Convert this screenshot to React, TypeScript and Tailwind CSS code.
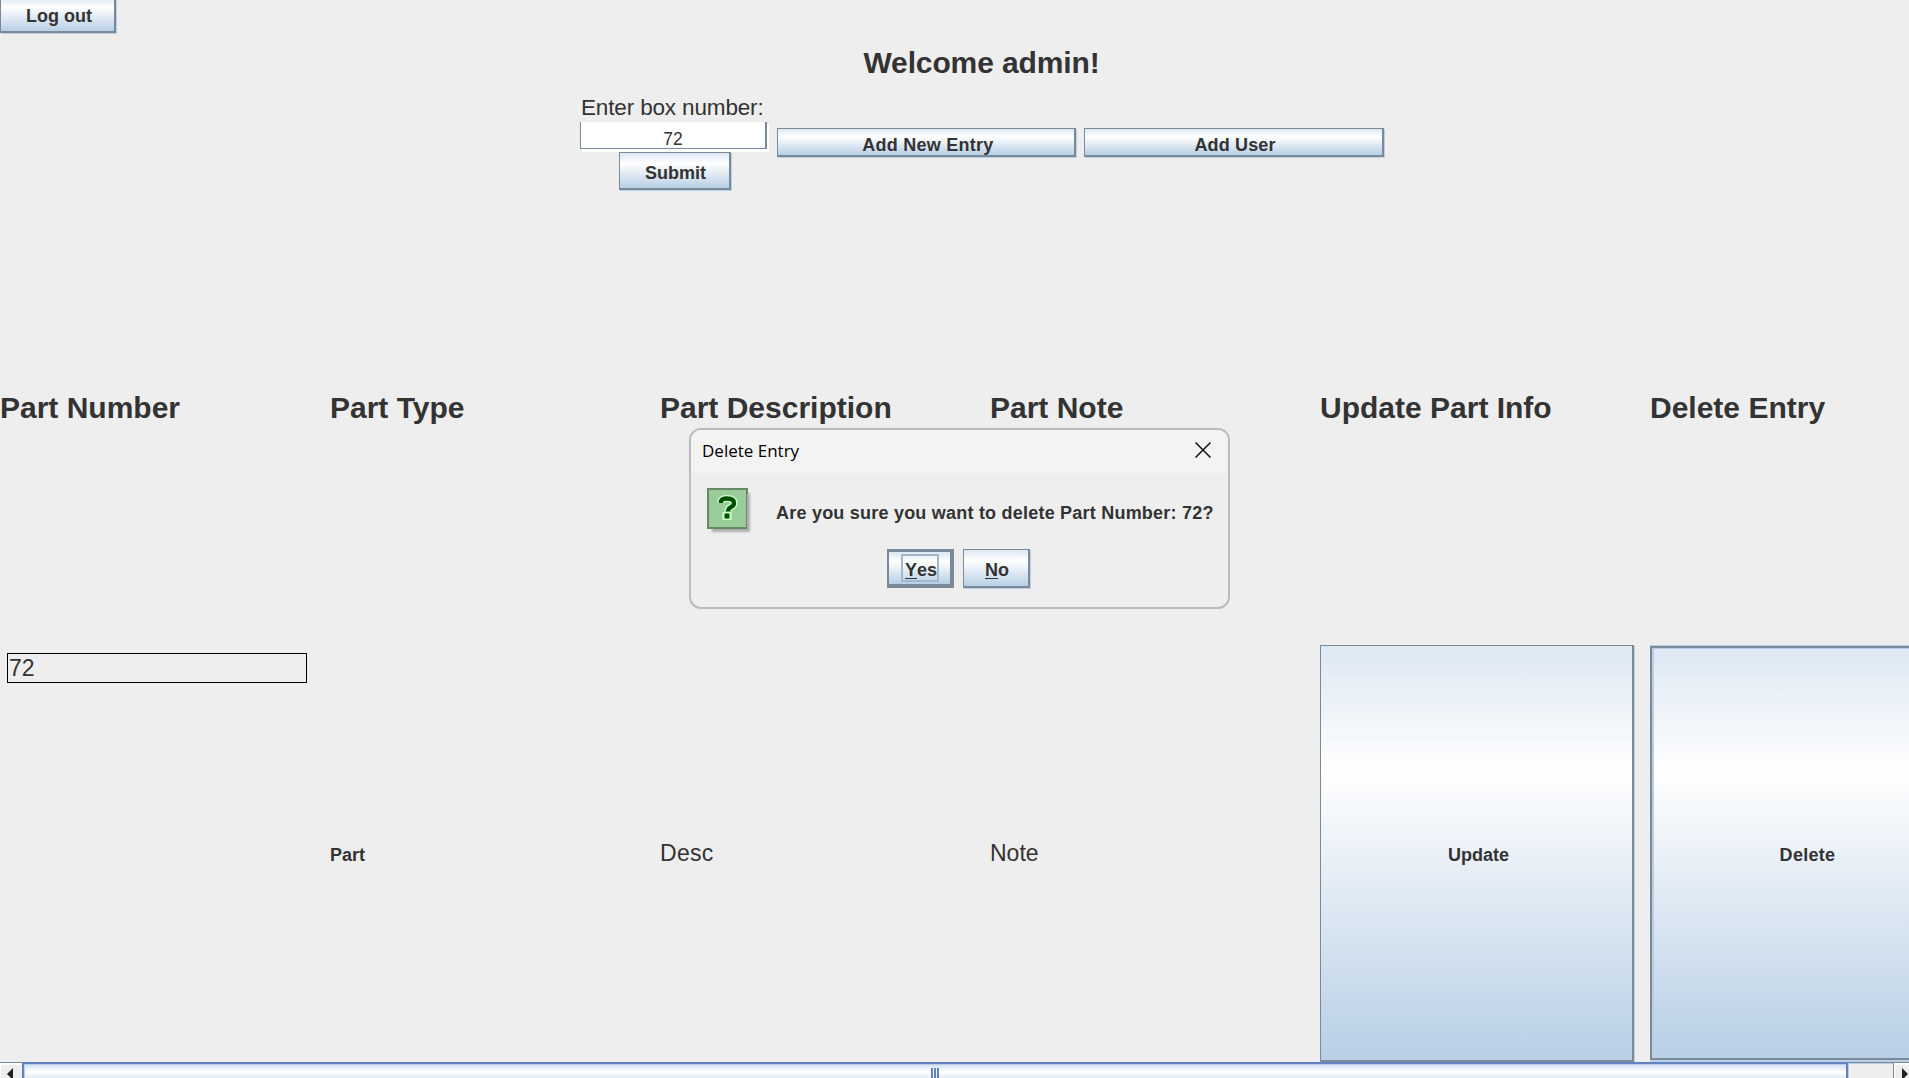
import type { ReactNode } from "react";

const SANS = "font-['Liberation_Sans',Arial,sans-serif]";

type ButtonProps = { className?: string; children: ReactNode };

function MetalButton({ className = "", children }: ButtonProps) {
  return (
    <button
      className={`flex items-center justify-center whitespace-nowrap border-t border-l border-r-2 border-b-2 border-[#7a8a99] bg-linear-to-b from-[#dde8f3] via-white via-30% to-[#b8cfe5] text-[18px] font-bold leading-5 shadow-[1px_1px_0_#b8cfe5] ${className}`}
    >
      {children}
    </button>
  );
}

function QuestionIcon() {
  return (
    <svg width="46" height="50" viewBox="0 0 46 50" className="shrink-0">
      <defs>
        <filter id="soft" x="-20%" y="-20%" width="140%" height="140%">
          <feGaussianBlur stdDeviation="1.3" />
        </filter>
      </defs>
      <rect x="5" y="5" width="38" height="39" fill="#999" opacity=".75" filter="url(#soft)" />
      <path d="M0 0H41V6H40V41H6V41H0Z" fill="#668866" />
      <rect x="2" y="2" width="37" height="37" fill="#99cc99" />
      <g fill="none" strokeLinejoin="round">
        <path d="M14 15V13Q15 10.500 20 10.500Q27 10.500 27 15Q27 18 24 19Q21 20.500 21 23.500" stroke="#ccffcc" strokeWidth="7" />
        <rect x="15.500" y="24" width="9" height="8" fill="#ccffcc" />
        <path d="M14 15V13Q15 10.500 20 10.500Q27 10.500 27 15Q27 18 24 19Q21 20.500 21 23.500" stroke="#004d00" strokeWidth="4.300" />
        <rect x="17.500" y="25.500" width="5" height="5" fill="#004d00" />
      </g>
    </svg>
  );
}

function DeleteDialog() {
  return (
    <div className="absolute left-[689px] top-[428px] flex h-[181px] w-[541px] flex-col overflow-hidden rounded-xl border-2 border-[#bbbbbb] bg-[#eeeeee]">
      <div className="flex h-[43px] shrink-0 items-center justify-between bg-[#f3f3f3] pr-[17px] pl-[11px] text-black">
        <span className="pb-0.5 font-['Open_Sans','Noto_Sans',sans-serif] text-[17px] leading-6">Delete Entry</span>
        <svg width="16" height="16" viewBox="0 0 16 16" className="mb-1">
          <path d="M.5 .5L15.500 15.500M15.500 .5L.5 15.500" stroke="#111" strokeWidth="1.500" />
        </svg>
      </div>
      <div className="flex h-[76px] shrink-0 pt-[15px] pl-4">
        <QuestionIcon />
        <span className="mt-[15px] ml-[23px] whitespace-nowrap text-[18px] font-bold leading-5 tracking-[0.22px]">
          Are you sure you want to delete Part Number: 72?
        </span>
      </div>
      <div className="flex gap-[9px] pl-[196px]">
        <button className="flex h-[39px] w-[67px] items-center justify-center border-t-[3px] border-r-4 border-b-4 border-l-2 border-[#7a8a99] bg-linear-to-b from-[#dde8f3] via-white via-30% to-[#b8cfe5] pl-px">
          <span className="flex h-7 w-[38px] items-end justify-center border-2 border-[#a3b8cc] pl-0.5 text-[18px] font-bold leading-5">
            <u className="underline-offset-2">Y</u>es
          </span>
        </button>
        <MetalButton className="h-[39px] w-[67px] pt-[4px] pl-0.5">
          <u className="underline-offset-2">N</u>o
        </MetalButton>
      </div>
    </div>
  );
}

function ScrollBar() {
  return (
    <div className="flex h-4 shrink-0 overflow-hidden">
      <div className="flex w-[22px] border-t border-[#7a8a99] pt-[5px] pl-[7px] shadow-[inset_1px_2px_0_white]">
        <svg width="6" height="12" viewBox="0 0 6 12"><path d="M6 0V12L0 6Z" fill="#222" /></svg>
      </div>
      <div className="flex h-6 w-[1826px] justify-center gap-px border-2 border-[#6382bf] bg-linear-to-b from-[#d0e0f0] via-white via-40% to-[#c8daeb] pt-1 shadow-[inset_1px_1px_0_#b8cfe5]">
        <i className="h-4 w-0.5 bg-[#6382bf]" />
        <i className="h-4 w-0.5 bg-[#6382bf]" />
        <i className="h-4 w-0.5 bg-[#6382bf]" />
      </div>
      <div className="w-[45px] border-t border-[#7a8a99] shadow-[inset_1px_1px_0_#b8cfe5]" />
      <div className="flex w-4 border-t border-l border-[#7a8a99] pt-[5px] pl-2 shadow-[inset_1px_2px_0_white]">
        <svg width="6" height="12" viewBox="0 0 6 12"><path d="M0 0V12L6 6Z" fill="#222" /></svg>
      </div>
    </div>
  );
}

const HEADERS = ["Part Number", "Part Type", "Part Description", "Part Note", "Update Part Info", "Delete Entry"];

export default function App() {
  return (
    <div className={`relative flex h-[1078px] w-[1909px] flex-col overflow-hidden bg-[#eeeeee] text-[#333333] ${SANS}`}>
      <header className="flex h-[33px] shrink-0">
        <MetalButton className="-mt-1 h-[37px] w-[116px] pt-1 pl-[3px]">Log out</MetalButton>
      </header>
      <h1 className="h-[63px] shrink-0 pt-[12px] pl-[54px] text-center text-[30px] font-bold leading-9 tracking-[-0.12px]">Welcome admin!</h1>

      <section className="flex h-[300px] shrink-0 items-start pl-[580px]">
        <div className="flex w-[189px] flex-col items-center">
          <label className="h-[26px] w-full whitespace-nowrap pl-px text-[22.5px] leading-6 tracking-[-0.15px]">Enter box number:</label>
          <div className="h-[27px] w-[187px] self-start border-r-2 border-b border-l border-[#7a8a99] bg-white pt-[7px] text-center text-[17.5px] leading-5 shadow-[2px_3px_0_white]">
            72
          </div>
          <MetalButton className="mt-[3px] h-[38px] w-[112px] pt-[4px] pl-[3px]">Submit</MetalButton>
        </div>
        <div className="mt-8 ml-2 flex gap-2">
          <MetalButton className="h-[29px] w-[299px] pt-[5px] pl-1 tracking-[0.25px]">Add New Entry</MetalButton>
          <MetalButton className="h-[29px] w-[300px] pt-[5px] pl-[3px] tracking-[0.15px]">Add User</MetalButton>
        </div>
      </section>

      <main className="grid h-[666px] shrink-0 grid-cols-[repeat(6,330px)] grid-rows-[249px_417px]">
        {HEADERS.map((title) => (
          <h2 key={title} className="-mt-[6px] whitespace-nowrap text-[30px] font-bold leading-9">{title}</h2>
        ))}
        <div className="pt-2 pl-[7px]">
          <div className="h-[30px] w-[300px] border border-black pl-px text-[23px] leading-7">72</div>
        </div>
        <div className="flex items-center pt-[3px] text-[18px] font-bold">Part</div>
        <div className="flex items-center text-[23px] tracking-[0.3px]">Desc</div>
        <div className="flex items-center text-[23px]">Note</div>
        <MetalButton className="h-[417px] w-[314px] pt-[4px] pl-1">Update</MetalButton>
        <div className="h-[417px] w-[315px] border-t border-b-2 border-[#b8cfe5]">
          <button className="flex h-[414px] w-[315px] items-center justify-center border-2 border-[#7a8a99] bg-linear-to-b from-[#dde8f3] via-white via-30% to-[#b8cfe5] pt-[4px] text-[18px] font-bold tracking-[0.3px] shadow-[inset_2px_1px_0_#b8cfe5]">
            Delete
          </button>
        </div>
      </main>
      <ScrollBar />
      <DeleteDialog />
    </div>
  );
}
